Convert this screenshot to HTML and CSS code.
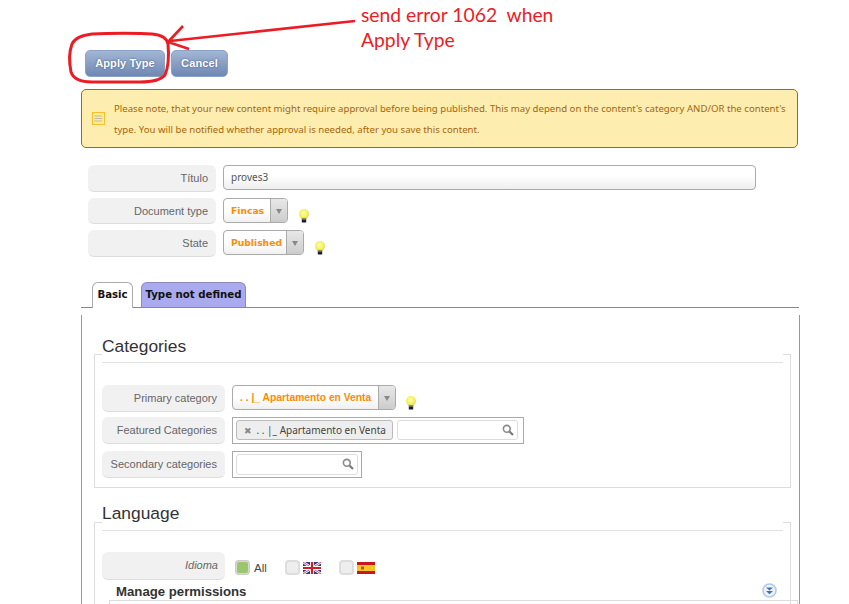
FILE: index.html
```html
<!DOCTYPE html>
<html lang="en">
<head>
<meta charset="utf-8">
<title>Apply Type</title>
<link rel="stylesheet" href="styles.css">
</head>
<body>
<svg width="0" height="0" class="defs">
  <defs>
    <radialGradient id="bulbglow" cx="45%" cy="40%" r="60%">
      <stop offset="0" stop-color="#ffffa8"/>
      <stop offset="0.65" stop-color="#f6f05c"/>
      <stop offset="1" stop-color="#dcd870"/>
    </radialGradient>
    <symbol id="bulb" viewBox="0 0 12 14">
      <circle cx="6" cy="5" r="5" fill="url(#bulbglow)"/>
      <rect x="3.6" y="9" width="4.8" height="1.6" fill="#8c8c58"/>
      <rect x="3.8" y="10.5" width="4.4" height="3" fill="#1e1e1e"/>
    </symbol>
    <symbol id="search" viewBox="0 0 12 12">
      <circle cx="4.8" cy="4.8" r="3.4" fill="none" stroke="#8a8a8a" stroke-width="1.6"/>
      <path d="M7.5 7.5 L11 11" stroke="#7a7a7a" stroke-width="2.2"/>
    </symbol>
  </defs>
</svg>

<main class="page">
  <div class="toolbar">
    <button class="btn btn-apply">Apply Type</button>
    <button class="btn btn-cancel">Cancel</button>
  </div>

  <div class="notice">
    <svg class="notice-icon" viewBox="0 0 13 13" width="13" height="13">
      <rect x="0.5" y="0.5" width="12" height="12" fill="#ffeb94" stroke="#f5c02e"/>
      <path d="M2.5 4 H10 M2.5 6.5 H10.5 M2.5 9 H10" stroke="#bdbb9c" stroke-width="1"/>
    </svg>
    <p class="notice-text">Please note, that your new content might require approval before being published. This may depend on the content's category AND/OR the content's type. You will be notified whether approval is needed, after you save this content.</p>
  </div>

  <div class="form">
    <div class="row">
      <label class="label">Título</label>
      <div class="input-title">proves3</div>
    </div>
    <div class="row">
      <label class="label">Document type</label>
      <div class="select select-fincas"><span class="select-value">Fincas</span><span class="select-arrow"></span></div>
      <svg class="bulb"><use href="#bulb"/></svg>
    </div>
    <div class="row">
      <label class="label">State</label>
      <div class="select select-state"><span class="select-value">Published</span><span class="select-arrow"></span></div>
      <svg class="bulb"><use href="#bulb"/></svg>
    </div>
  </div>

  <nav class="tabs">
    <span class="tab tab-active">Basic</span>
    <span class="tab tab-other">Type not defined</span>
  </nav>

  <section class="panel">
    <div class="group">
      <h3 class="group-title">Categories</h3>
      <div class="group-rows">
        <div class="row row-sub row-primary">
          <label class="label label-sub">Primary category</label>
          <div class="select select-wide"><span class="select-value">. . |_ Apartamento en Venta</span><span class="select-arrow"></span></div>
          <svg class="bulb bulb-tight"><use href="#bulb"/></svg>
        </div>
        <div class="row row-sub row-featured">
          <label class="label label-sub">Featured Categories</label>
          <div class="multi multi-featured">
            <span class="chip"><span class="chip-x">✖</span>. . |_ Apartamento en Venta</span>
            <span class="search search-featured"><svg class="search-icon"><use href="#search"/></svg></span>
          </div>
        </div>
        <div class="row row-sub">
          <label class="label label-sub">Secondary categories</label>
          <div class="multi multi-secondary">
            <span class="search search-secondary"><svg class="search-icon"><use href="#search"/></svg></span>
          </div>
        </div>
      </div>
    </div>

    <div class="group group-language">
      <h3 class="group-title">Language</h3>
      <div class="group-rows group-rows-language">
        <div class="row row-sub row-idioma">
          <label class="label label-sub label-idioma">Idioma</label>
          <div class="languages">
            <span class="radio radio-on"></span><span class="lang-all">All</span>
            <span class="radio radio-uk"></span>
            <svg class="flag" viewBox="0 0 18 12" width="18" height="12">
              <rect width="18" height="12" fill="#2a3f85"/>
              <path d="M0 0 L18 12 M18 0 L0 12" stroke="#fff" stroke-width="2.4"/>
              <path d="M0 0 L18 12 M18 0 L0 12" stroke="#c8202f" stroke-width="0.8"/>
              <path d="M9 0 V12 M0 6 H18" stroke="#fff" stroke-width="4"/>
              <path d="M9 0 V12 M0 6 H18" stroke="#c8202f" stroke-width="2.2"/>
            </svg>
            <span class="radio radio-es"></span>
            <svg class="flag" viewBox="0 0 18 12" width="18" height="12">
              <rect width="18" height="12" fill="#c9161d"/>
              <rect y="3" width="18" height="6" fill="#f7c51e"/>
              <rect x="4" y="4.5" width="3" height="3" fill="#b5502a"/>
            </svg>
          </div>
        </div>
      </div>
      <div class="permissions">
        <div class="permissions-head">
          <strong class="permissions-title">Manage permissions</strong>
          <svg class="chevrons" viewBox="0 0 15 15" width="15" height="15">
            <circle cx="7.5" cy="7.5" r="6.5" fill="#eef3fb" stroke="#b5c9e6" stroke-width="1.6"/>
            <path d="M4 4.5 H11 L7.5 7.5 Z M4 8 H11 L7.5 11.2 Z" fill="#3f72b8"/>
          </svg>
        </div>
        <div class="permissions-box"></div>
      </div>
    </div>
  </section>
</main>

<svg class="annotation" viewBox="0 0 849 604" width="849" height="604">
  <path d="M92 34 C110 33 140 33 152 34 C162 35 167 38 168 44 C169 55 168 68 165 75 C160 81 150 82 140 82 L92 82 C80 82 73 78 71 72 C69 62 69 52 72 44 C75 37 84 35 92 34 Z" fill="none" stroke="#ed1c24" stroke-width="3"/>
  <path d="M355 21 L170 41 M183 26 L168 42 L189 49" fill="none" stroke="#ed1c24" stroke-width="2.6"/>
</svg>
<p class="annotation-text">send error 1062&nbsp; when<br>Apply Type</p>
</body>
</html>
```

FILE: styles.css
```css
html, body {
  margin: 0;
  padding: 0;
  height: 604px;
  overflow: hidden;
  background: #fff;
}
body {
  position: relative;
  font-family: "Noto Sans", "Liberation Sans", sans-serif;
  color: #555;
}
.defs { position: absolute; }

.page {
  box-sizing: border-box;
  width: 849px;
  padding: 50px 0 0 81px;
}

/* toolbar */
.toolbar {
  display: flex;
  gap: 6px;
  padding-left: 4px;
}
.btn {
  box-sizing: border-box;
  height: 27px;
  padding: 0 0 2px;
  border: 1px solid #8ba3c9;
  border-radius: 5px;
  background: linear-gradient(#a3b6d6, #6f87b2);
  color: #fff;
  font: bold 11px "Liberation Sans", sans-serif;
  letter-spacing: 0.12px;
  text-shadow: 0 0 2px #3f5480;
}
.btn-apply { width: 80px; }
.btn-cancel { width: 57px; }

/* notice */
.notice {
  box-sizing: border-box;
  display: flex;
  align-items: center;
  gap: 9px;
  width: 717px;
  height: 59px;
  margin-top: 12px;
  padding: 0 8px 0 10px;
  border: 1px solid #a86a00;
  border-radius: 5px;
  background: #fdeeb0;
}
.notice-icon { flex: none; }
.notice-text {
  margin: 0;
  color: #a8650a;
  font-size: 9.62px;
  line-height: 21px;
}

/* form rows */
.form {
  display: flex;
  flex-direction: column;
  gap: 6px;
  margin-top: 17px;
  padding-left: 7px;
}
.row {
  display: flex;
  align-items: flex-start;
  gap: 7px;
}
.label {
  box-sizing: border-box;
  flex: none;
  width: 128px;
  height: 26.5px;
  padding-right: 8px;
  border-radius: 6px;
  border-bottom: 1px solid #ddd;
  background: #f1f1f1;
  color: #666;
  font: 11px/27px "Liberation Sans", sans-serif;
  text-align: right;
}
.input-title {
  box-sizing: border-box;
  width: 533px;
  height: 25px;
  padding-left: 7px;
  border: 1px solid #aaa;
  border-radius: 4px;
  background: linear-gradient(#fff 40%, #eee);
  color: #555;
  font-size: 10px;
  line-height: 23px;
}
.select {
  box-sizing: border-box;
  flex: none;
  display: flex;
  height: 25px;
  border: 1px solid #aaa;
  border-radius: 4px;
  background: linear-gradient(#fff 50%, #f0f0f0);
}
.select-fincas { width: 65px; }
.select-state { width: 81px; }
.select-value {
  flex: 1;
  min-width: 0;
  padding-left: 7px;
  color: #ff8c00;
  font: bold 9.2px/24px "DejaVu Sans", sans-serif;
  white-space: nowrap;
}
.select-wide { width: 164px; }
.select-wide .select-value {
  font: bold 10.3px/23px "Liberation Sans", sans-serif;
}
.select-arrow {
  flex: none;
  position: relative;
  width: 16px;
  border-left: 1px solid #aaa;
  border-radius: 0 3px 3px 0;
  background: linear-gradient(#e8e8e8, #ccc);
}
.select-arrow::after {
  content: "";
  position: absolute;
  left: 5px;
  top: 10px;
  border: 3px solid transparent;
  border-top: 5px solid #888;
  border-bottom: 0;
}
.bulb {
  flex: none;
  width: 12px;
  height: 14px;
  margin: 11px 0 0 3px;
}
.bulb-tight { margin-left: 2px; }

/* tabs */
.tabs {
  display: flex;
  align-items: flex-end;
  gap: 8px;
  height: 25px;
  margin-top: 25px;
  padding-left: 11px;
  border-bottom: 1px solid #888;
  width: 707px;
}
.tab {
  box-sizing: border-box;
  height: 25px;
  border: 1px solid #aaa;
  border-bottom: 0;
  border-radius: 6px 6px 0 0;
  color: #111;
  font: bold 10.2px/24px "DejaVu Sans", sans-serif;
  text-align: center;
}
.tab-active {
  width: 41px;
  height: 26px;
  margin-bottom: -1px;
  background: #fff;
}
.tab-other {
  width: 105px;
  background: #aaaaee;
  border-color: #8a8ac0;
}

/* panel */
.panel {
  box-sizing: border-box;
  width: 719px;
  height: 300px;
  margin-top: 7px;
  padding: 39px 0 0 12px;
  border-left: 1px solid #999;
  border-right: 1px solid #999;
}
.group {
  box-sizing: border-box;
  width: 697px;
  height: 134px;
  padding: 0 7px;
  border: 1px solid #ddd;
}
.group-language {
  height: 200px;
  margin-top: 34px;
}
.group-title {
  width: 681px;
  height: 27px;
  box-sizing: border-box;
  margin: -19px 0 0;
  padding-bottom: 6px;
  border-bottom: 1px solid #e2e2e2;
  background: #fff;
  color: #333;
  font: normal 17.4px/20px "Liberation Sans", sans-serif;
}
.group-language .group-title {
  height: 28px;
  margin-top: -20px;
  padding-bottom: 7px;
}
.group-rows {
  display: flex;
  flex-direction: column;
  gap: 6px;
  margin-top: 22px;
}
.group-rows-language { margin-top: 21px; }
.row-primary { height: 26px; }
.row-featured { height: 28px; }
.label-sub { width: 123px; height: 27px; }
.multi {
  box-sizing: border-box;
  flex: none;
  display: flex;
  gap: 4px;
  height: 27px;
  padding: 2px 3px;
  border: 1px solid #aaa;
}
.multi-featured { width: 292px; }
.multi-secondary { width: 130px; }
.chip {
  box-sizing: border-box;
  width: 157px;
  height: 20px;
  border: 1px solid #bbb;
  border-radius: 3px;
  background: #eee;
  color: #444;
  font-size: 10px;
  line-height: 18px;
  white-space: nowrap;
  padding-left: 7px;
}
.chip-x {
  margin-right: 5px;
  color: #888;
  font: 9px "DejaVu Sans", sans-serif;
}
.search {
  box-sizing: border-box;
  display: flex;
  align-items: center;
  justify-content: flex-end;
  height: 20px;
  padding-right: 3px;
  border: 1px solid #ddd;
  border-radius: 3px;
  background: #fff;
}
.search-featured { width: 121px; }
.search-secondary { width: 122px; height: 21px; }
.search-icon { width: 12px; height: 12px; }

/* language */
.row-idioma .label-idioma {
  height: 28px;
  padding-right: 7px;
  font-style: italic;
  line-height: 26px;
}
.languages {
  display: flex;
  align-items: center;
  height: 16px;
  margin-top: 8px;
  padding-left: 3px;
  color: #444;
  font: 11.5px "Liberation Sans", sans-serif;
}
.radio {
  box-sizing: border-box;
  width: 15px;
  height: 15px;
  border: 2px solid #ddd;
  border-radius: 4px;
  background: #eee;
}
.radio-on { background: #9cc56f; border-color: #d8d8d0; outline: 1px solid #ccc; outline-offset: -1px; }
.lang-all { margin: 0 0 0 4px; }
.radio-uk { margin: 0 3px 0 18px; }
.radio-es { margin: 0 3px 0 18px; }
.flag { flex: none; }

/* permissions */
.permissions {
  width: 689px;
  margin: 2px 0 0 7px;
}
.permissions-head {
  display: flex;
  align-items: center;
  justify-content: space-between;
  height: 18px;
  padding: 0 21px 0 7px;
}
.permissions-title {
  padding-top: 1px;
  color: #333;
  font: bold 13.2px "Liberation Sans", sans-serif;
}
.chevrons { flex: none; }
.permissions-box {
  height: 60px;
  border: 1px solid #ddd;
}

/* red annotation drawn on the screenshot */
.annotation {
  position: absolute;
  left: 0;
  top: 0;
  pointer-events: none;
}
.annotation-text {
  position: absolute;
  left: 361px;
  top: 2px;
  margin: 0;
  color: #ed1c24;
  font: 19.3px/25px Lato, sans-serif;
  white-space: nowrap;
}
```
